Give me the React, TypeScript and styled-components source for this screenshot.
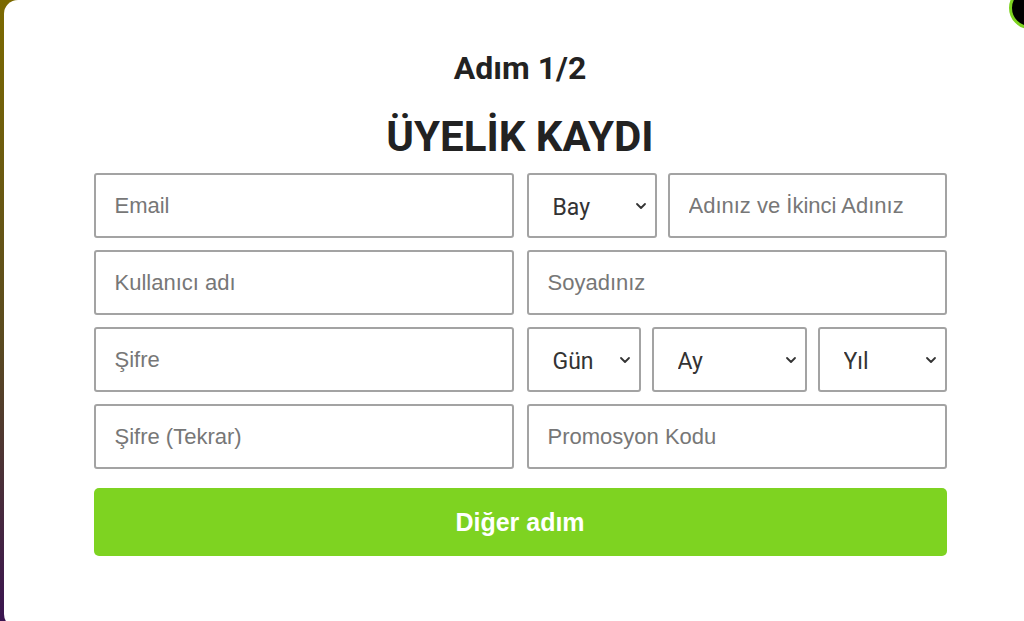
import styled, { createGlobalStyle } from 'styled-components';

const GlobalStyle = createGlobalStyle`
  html, body {
    margin: 0;
    padding: 0;
    height: 100%;
    overflow: hidden;
  }
  body {
    background: linear-gradient(to bottom, #7c6a00 0%, #5a4a20 55%, #3a1450 100%);
  }
`;

const Chevron = () => (
  <svg width="12" height="8" viewBox="0 0 12 8" fill="none">
    <path d="M2 2l4 4 4-4" stroke="#333" strokeWidth="1.8" strokeLinecap="round" strokeLinejoin="round" />
  </svg>
);

const Select = ({ label, width }: { label: string; width: number }) => (
  <SelectBox $width={width}>
    <SelectField defaultValue="">
      <option value="">{label}</option>
    </SelectField>
    <ChevronHolder>
      <Chevron />
    </ChevronHolder>
  </SelectBox>
);

const App = () => {
  return (
    <Page>
      <GlobalStyle />
      <Modal>
        <CloseButton aria-label="close" />
        <Step>Adım 1/2</Step>
        <Title>ÜYELİK KAYDI</Title>
        <Form onSubmit={(e) => e.preventDefault()}>
          <Input placeholder="Email" />
          <Row>
            <Select label="Bay" width={130} />
            <Input placeholder="Adınız ve İkinci Adınız" />
          </Row>
          <Input placeholder="Kullanıcı adı" />
          <Input placeholder="Soyadınız" />
          <Input type="password" placeholder="Şifre" />
          <Row>
            <Select label="Gün" width={114} />
            <Select label="Ay" width={155} />
            <Select label="Yıl" width={129} />
          </Row>
          <Input type="password" placeholder="Şifre (Tekrar)" />
          <Input placeholder="Promosyon Kodu" />
          <NextButton type="submit">Diğer adım</NextButton>
        </Form>
      </Modal>
    </Page>
  );
};

const Page = styled.div`
  height: 100vh;
  padding-left: 4px;
  display: flex;
`;

const Modal = styled.div`
  position: relative;
  flex-shrink: 0;
  width: 1032px;
  height: 628px;
  background-color: #fff;
  border-radius: 14px 0 0 14px;
  padding-top: 50px;
  box-sizing: border-box;
  display: flex;
  flex-direction: column;
  align-items: center;
`;

const CloseButton = styled.button`
  position: absolute;
  top: -13px;
  right: -15px;
  width: 42px;
  height: 42px;
  border-radius: 50%;
  background-color: #000;
  border: 3px solid #7ed321;
  padding: 0;
`;

const Step = styled.h2`
  margin: 0;
  font-family: Roboto, 'Liberation Sans', sans-serif;
  font-size: 32px;
  font-weight: 700;
  line-height: 36px;
  color: #222;
`;

const Title = styled.h1`
  margin: 27px 0 0;
  font-family: Roboto, 'Liberation Sans', sans-serif;
  font-size: 42px;
  font-weight: 700;
  line-height: 48px;
  color: #222;
`;

const Form = styled.form`
  margin-top: 12px;
  width: 853px;
  display: grid;
  grid-template-columns: 420px 420px;
  column-gap: 13px;
  row-gap: 12px;
`;

const Row = styled.div`
  display: flex;
  gap: 11px;
`;

const Input = styled.input`
  flex: 1;
  min-width: 0;
  height: 65px;
  box-sizing: border-box;
  border: 2px solid #a3a3a3;
  border-radius: 3px;
  padding: 0 19px;
  font-family: 'Liberation Sans', Arial, sans-serif;
  font-size: 22px;
  color: #333;
  outline: none;

  &::placeholder {
    color: #777;
  }
`;

const SelectBox = styled.div<{ $width: number }>`
  position: relative;
  width: ${(p) => p.$width}px;
  flex-shrink: 0;
`;

const SelectField = styled.select`
  appearance: none;
  width: 100%;
  height: 65px;
  box-sizing: border-box;
  border: 2px solid #a3a3a3;
  border-radius: 3px;
  background-color: #fff;
  padding: 3px 30px 0 24px;
  font-family: Roboto, 'Liberation Sans', sans-serif;
  font-size: 23px;
  color: #333;
  outline: none;
`;

const ChevronHolder = styled.span`
  position: absolute;
  right: 10px;
  top: 50%;
  transform: translateY(-50%);
  display: flex;
  pointer-events: none;
`;

const NextButton = styled.button`
  grid-column: 1 / -1;
  margin-top: 7px;
  height: 68px;
  border: none;
  border-radius: 5px;
  background-color: #7ed321;
  color: #fff;
  font-family: 'Liberation Sans', Arial, sans-serif;
  font-size: 25px;
  font-weight: 700;
  cursor: pointer;
`;

export default App;
